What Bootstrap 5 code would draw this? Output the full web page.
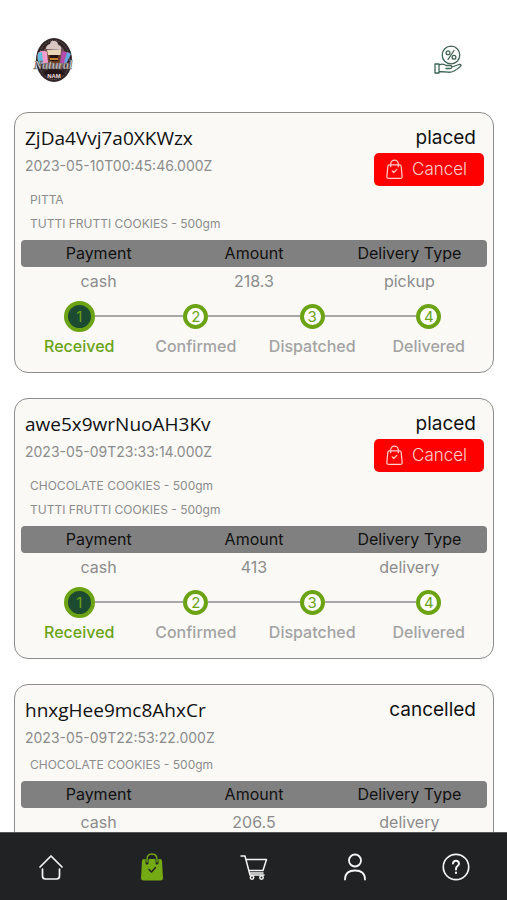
<!DOCTYPE html>
<html lang="en">
<head>
<meta charset="utf-8">
<meta name="viewport" content="width=device-width, initial-scale=1">
<title>Orders</title>
<link href="https://cdn.jsdelivr.net/npm/bootstrap@5.3.0/dist/css/bootstrap.min.css" rel="stylesheet">
<style>
body { font-family: Inter, "Liberation Sans", sans-serif; background: #fff; color: #111; }
svg { display: block; }
.top-bar { height: 112px; padding: 8px 45px 0 31px; }
.orders { scrollbar-width: none; padding: 0 13px 24px 14px; gap: 25px; }
.order { background: #faf9f6; border: 1px solid #8c8c8c; border-radius: 14px; padding: 12px 6px 14px; }
.order-id, .order-state { font-size: 19px; line-height: 26px; font-weight: 400; margin: 0; }
.order-id { font-family: "Open Sans", sans-serif; }
.order-id, .order-date { padding-left: 4px; }
.order-state { padding-right: 11px; }
.order-date { font-size: 14px; line-height: 30px; color: #8c8c8c; }
.btn-cancel { --bs-btn-color: #ffd0cc; --bs-btn-bg: #f00; --bs-btn-hover-color: #fff; --bs-btn-hover-bg: #d90000; --bs-btn-padding-x: 12px; --bs-btn-padding-y: 0; --bs-btn-border-width: 0; --bs-btn-border-radius: 5px; font-size: 17px; font-weight: 300; width: 110px; height: 33px; margin: 2px 3px 2px 0; gap: 9px; }
.items { font-size: 12px; line-height: 24px; color: #8c8c8c; padding-left: 9px; margin-bottom: 4px; }
.facts { table-layout: fixed; border-collapse: separate; border-spacing: 0; font-size: 16px; }
.facts th { background: #808080; font-weight: 400; line-height: 27px; padding: 0; }
.facts th:first-child { border-radius: 4px 0 0 4px; }
.facts th:last-child { border-radius: 0 4px 4px 0; }
.facts td { color: #8c8c8c; line-height: 28px; padding: 0; }
.steps { padding-top: 5px; font-size: 16px; font-weight: 500; color: #a3a3a3; }
.step-rail { height: 32px; }
.step-rail::before, .step-rail::after { content: ""; flex: 1; height: 2px; background: #a8a8a8; }
.step:first-child .step-rail::before, .step:last-child .step-rail::after { visibility: hidden; }
.dot { width: 25px; height: 25px; border: 4px solid #6ba314; background: #fff; color: #6ba314; font-size: 15px; font-weight: 400; line-height: 1; }
.step.current { color: #6ba314; }
.step.current .dot { width: 31px; height: 31px; background: #1d4b32; }
.step-name { line-height: 24px; margin-top: 2px; }
.tabs { height: 68px; background: #212223; border-top: 1px solid #55585a; color: #f5f5f5; }
.tabs a { color: inherit; }
.tabs .current-tab { color: #74aa14; }
</style>
<script src="https://cdn.jsdelivr.net/npm/bootstrap@5.3.0/dist/js/bootstrap.bundle.min.js"></script>
</head>
<body>
<svg class="d-none" aria-hidden="true">
  <symbol id="bag" viewBox="0 0 18 22"><g fill="none" stroke="currentColor" stroke-width="1.3" stroke-linecap="round" stroke-linejoin="round"><path d="M3.5 6h11q1.300 0 1.500 1.300l1.100 11q.2 2.200-2 2.200H2.900q-2.200 0-2-2.200L2 7.300Q2.200 6 3.500 6z"/><path d="M5 8V5a4 4 0 0 1 8 0v3M6.500 12.500l1.700 1.700 3.300-3.400"/></g></symbol>
</svg>
<div class="vh-100 d-flex flex-column">
<header class="top-bar d-flex justify-content-between align-items-center flex-shrink-0">
  <a href="#" aria-label="Home page">
    <svg width="44" height="50" viewBox="0 0 44 50">
      <ellipse cx="23" cy="25" rx="18" ry="22" fill="#302426"/>
      <ellipse cx="23" cy="25" rx="15.500" ry="19.500" fill="none" stroke="#776568" stroke-width="1" stroke-dasharray="1 1"/>
      <ellipse cx="23" cy="23" rx="12" ry="15" fill="#6b5053"/>
      <path d="M15 14q0-4 4-5 1-4 4-3 4 0 4 4 4 1 3 5z" fill="#d8c6c2"/>
      <path d="M16 15h14l-2 14h-10z" fill="#69391d"/><path d="M16 15h14l-.5 5H17z" fill="#ead7b8"/><path d="M19 20h8v6h-8z" fill="#251611"/><path d="M19 24h8" stroke="#c88532" stroke-width="2"/>
      <path d="M7 18q4-4 9-1l1 11-7 1q-5-5-3-11z" fill="#f39bcb"/><path d="M7 18l4-1 1 11-4 1q-2-5-1-11z" fill="#65bde0"/>
      <path d="M31 16l8 2-4 11-6-1z" fill="#b44ca9"/><path d="M36 17l4 2-5 10-2-1z" fill="#65a8de"/>
      <path d="M12 39l6-6h10l6 6q-11 5-22 0z" fill="#251719"/>
      <text x="22" y="34" text-anchor="middle" font-family="Liberation Serif, serif" font-style="italic" font-weight="700" font-size="12" fill="#d8d2d0" stroke="#6d6366" stroke-width=".5">Natural</text>
      <text x="23" y="43" text-anchor="middle" font-family="Liberation Sans, sans-serif" font-weight="700" font-size="6" fill="#f3dede">NAM</text>
    </svg>
  </a>
  <a href="#" aria-label="Offers">
    <svg width="28" height="30" viewBox="0 0 28 30" fill="none" stroke="#3f6455" stroke-width="1.300" stroke-linecap="round" stroke-linejoin="round">
      <circle cx="17" cy="10" r="8.800"/><path d="M20 5.500l-6 9"/><circle cx="14" cy="7.800" r="1.900"/><circle cx="20" cy="12.200" r="1.900"/>
      <path d="M1 19h4v9H1zM5 20q4-2 7 .5h4q2 0 2 1.500t-2 1.500h-4M18 22l7-2.500q2-.3 2 1-1 2-7 5.500-3 1.500-6 1.200L5 26.500"/>
    </svg>
  </a>
</header>
<main class="orders flex-grow-1 overflow-auto d-flex flex-column" id="orders"></main>
<nav class="tabs d-flex flex-shrink-0 align-items-center" aria-label="Main">
  <a href="#" class="col d-flex justify-content-center" aria-label="Home"><svg width="26" height="28" viewBox="0 0 26 28" fill="none" stroke="currentColor" stroke-width="1.700" stroke-linecap="round" stroke-linejoin="round"><path d="M2 14L13 3l11 11M4.500 16v7q0 3 3 3h11q3 0 3-3v-7"/></svg></a>
  <a href="#" class="col d-flex justify-content-center current-tab" aria-label="Orders" aria-current="page"><svg width="24" height="28" viewBox="0 0 24 28" fill="none" stroke-linecap="round" stroke-linejoin="round"><path d="M4 6h16q2 0 2 2l1 17q0 2.500-2.500 2.500h-17Q1 27.500 1 25L2 8q0-2 2-2z" fill="currentColor"/><path d="M7 10V7q0-5.500 5-5.500T17 7v3" stroke="#212223" stroke-width="3"/><path d="M7 9V6.500Q7 1 12 1t5 5.500V9" stroke="currentColor" stroke-width="1.400"/><path d="M9 16.500l2.500 2.500 4-4.500" stroke="#212223" stroke-width="1.500"/></svg></a>
  <a href="#" class="col d-flex justify-content-center" aria-label="Cart"><svg width="28" height="28" viewBox="0 0 28 28" fill="none" stroke="currentColor" stroke-width="1.500" stroke-linecap="round" stroke-linejoin="round"><path d="M1 3h4l5 19h14M6 6.500h20.500L23 17.500H9M9.500 20H23"/><circle cx="12" cy="24.500" r="1.700"/><circle cx="21.500" cy="24.500" r="1.700"/></svg></a>
  <a href="#" class="col d-flex justify-content-center" aria-label="Profile"><svg width="26" height="28" viewBox="0 0 26 28" fill="none" stroke="currentColor" stroke-width="1.800" stroke-linecap="round"><circle cx="13" cy="7.500" r="6"/><path d="M3 26.500q0-9 10-9t10 9"/></svg></a>
  <a href="#" class="col d-flex justify-content-center" aria-label="Help"><svg width="28" height="28" viewBox="0 0 28 28" fill="none" stroke="currentColor" stroke-width="1.700" stroke-linecap="round"><circle cx="14" cy="14" r="12.700"/><path d="M11 10.500q.3-2.800 3-2.800t3 2.800q0 1.500-1.500 2.500T14 16v.5" stroke-width="2"/><path d="M14 19.700v.2" stroke-width="2.200"/></svg></a>
</nav>
</div>
<script>
const orders = [
  { id: "ZjDa4Vvj7a0XKWzx", date: "2023-05-10T00:45:46.000Z", state: "placed", items: ["PITTA", "TUTTI FRUTTI COOKIES - 500gm"], amount: "218.3", type: "pickup" },
  { id: "awe5x9wrNuoAH3Kv", date: "2023-05-09T23:33:14.000Z", state: "placed", items: ["CHOCOLATE COOKIES - 500gm", "TUTTI FRUTTI COOKIES - 500gm"], amount: "413", type: "delivery" },
  { id: "hnxgHee9mc8AhxCr", date: "2023-05-09T22:53:22.000Z", state: "cancelled", items: ["CHOCOLATE COOKIES - 500gm"], amount: "206.5", type: "delivery" }
];
const steps = ["Received", "Confirmed", "Dispatched", "Delivered"];
const stepList = `<ol class="steps list-unstyled d-flex text-center mb-0">${steps.map((s, i) => `<li class="step w-25${i ? "" : " current"}"><div class="step-rail d-flex align-items-center"><span class="dot rounded-circle d-flex align-items-center justify-content-center">${i + 1}</span></div><div class="step-name">${s}</div></li>`).join("")}</ol>`;
document.getElementById("orders").innerHTML = orders.map(o => `
<article class="order flex-shrink-0">
  <div class="d-flex justify-content-between">
    <div><h2 class="order-id">${o.id}</h2><div class="order-date">${o.date}</div></div>
    <div class="d-flex flex-column align-items-end"><div class="order-state">${o.state}</div>
    ${o.state === "placed" ? `<button type="button" class="btn btn-cancel d-flex align-items-center"><svg width="17" height="21" aria-hidden="true"><use href="#bag"/></svg>Cancel</button>` : ""}</div>
  </div>
  <ul class="items list-unstyled">${o.items.map(i => `<li>${i}</li>`).join("")}</ul>
  <table class="facts w-100 text-center"><thead><tr><th scope="col">Payment</th><th scope="col">Amount</th><th scope="col">Delivery Type</th></tr></thead>
  <tbody><tr><td>cash</td><td>${o.amount}</td><td>${o.type}</td></tr></tbody></table>
  ${o.state === "placed" ? stepList : ""}
</article>`).join("");
</script>
</body>
</html>
